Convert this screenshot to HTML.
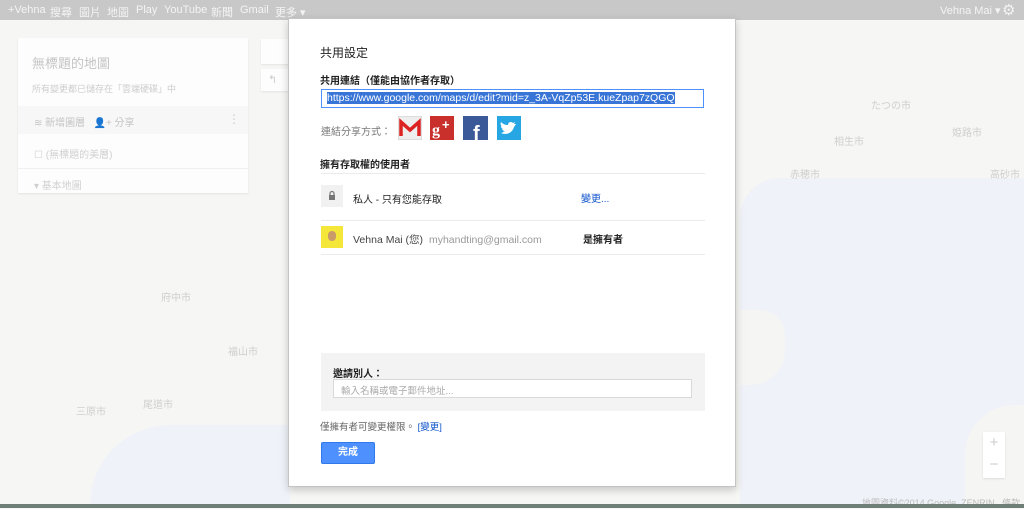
<!DOCTYPE html>
<html><head><meta charset="utf-8">
<style>
*{margin:0;padding:0;box-sizing:border-box}
body{width:1024px;height:508px;overflow:hidden;position:relative;font-family:"Liberation Sans","Noto Sans CJK TC",sans-serif;font-size:11px;color:#222;background:#f6f6f4}
.abs{position:absolute}
#top{left:0;top:0;width:1024px;height:20px;background:#c8c8c8;color:#f4f4f4;font-size:11px}
#top span{position:absolute;top:4px}
.sea{background:#eff2f8}
.maplbl{color:#cfcfcf;font-size:10px}
.panel{background:#fdfdfd;box-shadow:0 1px 2px rgba(0,0,0,.08)}
#dlg{left:288px;top:18px;width:448px;height:469px;background:#fff;border:1px solid #c4c4c4;box-shadow:0 3px 8px rgba(0,0,0,.2)}
.hr{position:absolute;left:32px;width:384px;height:1px;background:#ebebeb}
</style></head><body>
<div class="abs sea" style="left:740px;top:178px;width:284px;height:330px;border-radius:40px 0 0 0"></div>
<div class="abs sea" style="left:90px;top:425px;width:200px;height:80px;border-radius:80px 0 0 0"></div>
<div class="abs" style="left:740px;top:310px;width:45px;height:75px;background:#f5f5f3;border-radius:0 25px 35px 0"></div>
<div class="abs" style="left:965px;top:405px;width:59px;height:100px;background:#f5f5f3;border-radius:50px 0 0 0"></div>
<span class="abs maplbl" style="left:871px;top:97px">たつの市</span>
<span class="abs maplbl" style="left:952px;top:124px">姫路市</span>
<span class="abs maplbl" style="left:834px;top:133px">相生市</span>
<span class="abs maplbl" style="left:790px;top:166px">赤穂市</span>
<span class="abs maplbl" style="left:990px;top:166px">高砂市</span>
<span class="abs maplbl" style="left:161px;top:289px">府中市</span>
<span class="abs maplbl" style="left:228px;top:343px">福山市</span>
<span class="abs maplbl" style="left:143px;top:396px">尾道市</span>
<span class="abs maplbl" style="left:76px;top:403px">三原市</span>
<span class="abs" style="left:862px;top:496px;font-size:9px;color:#bbb">地圖資料©2014 Google, ZENRIN &nbsp; 條款</span>
<div class="abs" style="left:983px;top:432px;width:22px;height:46px;background:#fff;color:#ccc;text-align:center;font-size:15px;line-height:22px;box-shadow:0 1px 2px rgba(0,0,0,.1)">+<br>−</div>
<div class="abs" style="left:0;top:504px;width:1024px;height:4px;background:#6f7f78"></div>
<div class="abs panel" style="left:18px;top:38px;width:230px;height:155px"></div>
<span class="abs" style="left:32px;top:53px;font-size:13px;color:#c4c4c4">無標題的地圖</span>
<span class="abs" style="left:32px;top:82px;font-size:9px;color:#cdcdcd">所有變更都已儲存在「雲端硬碟」中</span>
<div class="abs" style="left:18px;top:106px;width:230px;height:28px;background:#f7f7f7"></div>
<span class="abs" style="left:34px;top:114px;font-size:10px;color:#c4c4c4">≋ 新增圖層 &nbsp; 👤+ 分享</span>
<span class="abs" style="left:228px;top:112px;font-size:12px;color:#ccc">⋮</span>
<span class="abs" style="left:34px;top:146px;font-size:10px;color:#d0d0d0">☐ (無標題的美層)</span>
<div class="abs" style="left:18px;top:168px;width:230px;height:1px;background:#f0f0f0"></div>
<span class="abs" style="left:34px;top:177px;font-size:10px;color:#d0d0d0">▾ 基本地圖</span>
<div class="abs panel" style="left:261px;top:39px;width:28px;height:25px"></div>
<div class="abs panel" style="left:261px;top:69px;width:28px;height:22px;color:#ccc;font-size:11px;padding:4px 7px">↰</div>
<div id="top" class="abs">
<span style="left:8px">+Vehna</span><span style="left:50px">搜尋</span><span style="left:79px">圖片</span><span style="left:107px">地圖</span><span style="left:136px">Play</span><span style="left:164px">YouTube</span><span style="left:211px">新聞</span><span style="left:240px">Gmail</span><span style="left:275px">更多 ▾</span>
<span style="left:940px">Vehna Mai ▾</span><span style="left:1002px;top:1px;font-size:15px">⚙</span>
</div>
<div id="dlg" class="abs">
<div class="abs" style="left:31px;top:25px;font-size:12px;color:#222">共用設定</div>
<div class="abs" style="left:31px;top:53px;font-size:10px;font-weight:bold;color:#222">共用連結（僅能由協作者存取）</div>
<div class="abs" style="left:32px;top:70px;width:383px;height:19px;border:1px solid #4d90fe;padding:2px 5px"><span style="background:#3875d7;color:#fff;font-size:10.5px;line-height:13px">https://www.google.com/maps/d/edit?mid=z_3A-VqZp53E.kueZpap7zQGQ</span></div>
<div class="abs" style="left:32px;top:104px;font-size:10px;color:#777">連結分享方式：</div>
<svg class="abs" style="left:109px;top:97px" width="24" height="24"><rect width="24" height="24" fill="#eee" stroke="#ccc"/><path d="M3 20V6l9 8 9-8v14" fill="none" stroke="#d22" stroke-width="3.5"/></svg>
<svg class="abs" style="left:141px;top:97px" width="24" height="24"><rect width="24" height="24" fill="#c9302c"/><text x="2" y="19" fill="#fff" font-size="16" font-weight="bold" font-family="Liberation Serif">g</text><text x="12" y="13" fill="#fff" font-size="13" font-weight="bold">+</text></svg>
<svg class="abs" style="left:174px;top:97px" width="25" height="24"><rect width="25" height="24" fill="#3b5998"/><text x="10" y="24" fill="#fff" font-size="20" font-weight="bold">f</text></svg>
<svg class="abs" style="left:208px;top:97px" width="24" height="24"><rect width="24" height="24" fill="#26a7e3"/><path d="M4 17c4 2 11 1 13-6l2-3-2 0 1-2-2 1c-2-2-5-1-5 2-3 0-5-1-7-3-1 2 0 4 1 4l-1 0c0 2 1 3 3 3l-2 0c1 2 2 2 3 2-2 1-3 2-4 2z" fill="#fff"/></svg>
<div class="abs" style="left:31px;top:137px;font-size:10px;font-weight:bold">擁有存取權的使用者</div>
<div class="hr" style="top:154px"></div>
<svg class="abs" style="left:32px;top:166px" width="22" height="22"><rect width="22" height="22" fill="#f1f1f1"/><rect x="8" y="10" width="6" height="5" fill="#777"/><path d="M9 10V8.5a2 2 0 0 1 4 0V10" fill="none" stroke="#777" stroke-width="1.2"/></svg>
<div class="abs" style="left:64px;top:172px;font-size:10px">私人 - 只有您能存取</div>
<div class="abs" style="left:292px;top:171px;font-size:10px;color:#15c">變更...</div>
<div class="hr" style="top:201px"></div>
<div class="abs" style="left:32px;top:207px;width:22px;height:22px;background:#f5e63a"><div style="margin:5px 0 0 7px;width:8px;height:10px;border-radius:4px;background:#c99a6a"></div></div>
<div class="abs" style="left:64px;top:213px;font-size:10.5px;color:#444">Vehna Mai (您) <span style="color:#999;margin-left:3px">myhandting@gmail.com</span></div>
<div class="abs" style="left:294px;top:212px;font-size:10px;font-weight:bold">是擁有者</div>
<div class="hr" style="top:235px"></div>
<div class="abs" style="left:32px;top:334px;width:384px;height:58px;background:#f3f3f3"></div>
<div class="abs" style="left:44px;top:346px;font-size:10px;font-weight:bold">邀請別人：</div>
<div class="abs" style="left:44px;top:360px;width:359px;height:19px;background:#fff;border:1px solid #d9d9d9;padding:3px 7px;font-size:9.5px;color:#aaa">輸入名稱或電子郵件地址...</div>
<div class="abs" style="left:31px;top:400px;font-size:9.5px;color:#666">僅擁有者可變更權限。 <span style="color:#15c">[變更]</span></div>
<div class="abs" style="left:32px;top:423px;width:54px;height:22px;background:#4d90fe;border:1px solid #3079ed;border-radius:2px;color:#fff;font-size:10px;font-weight:bold;text-align:center;line-height:20px">完成</div>
</div>
</body></html>
